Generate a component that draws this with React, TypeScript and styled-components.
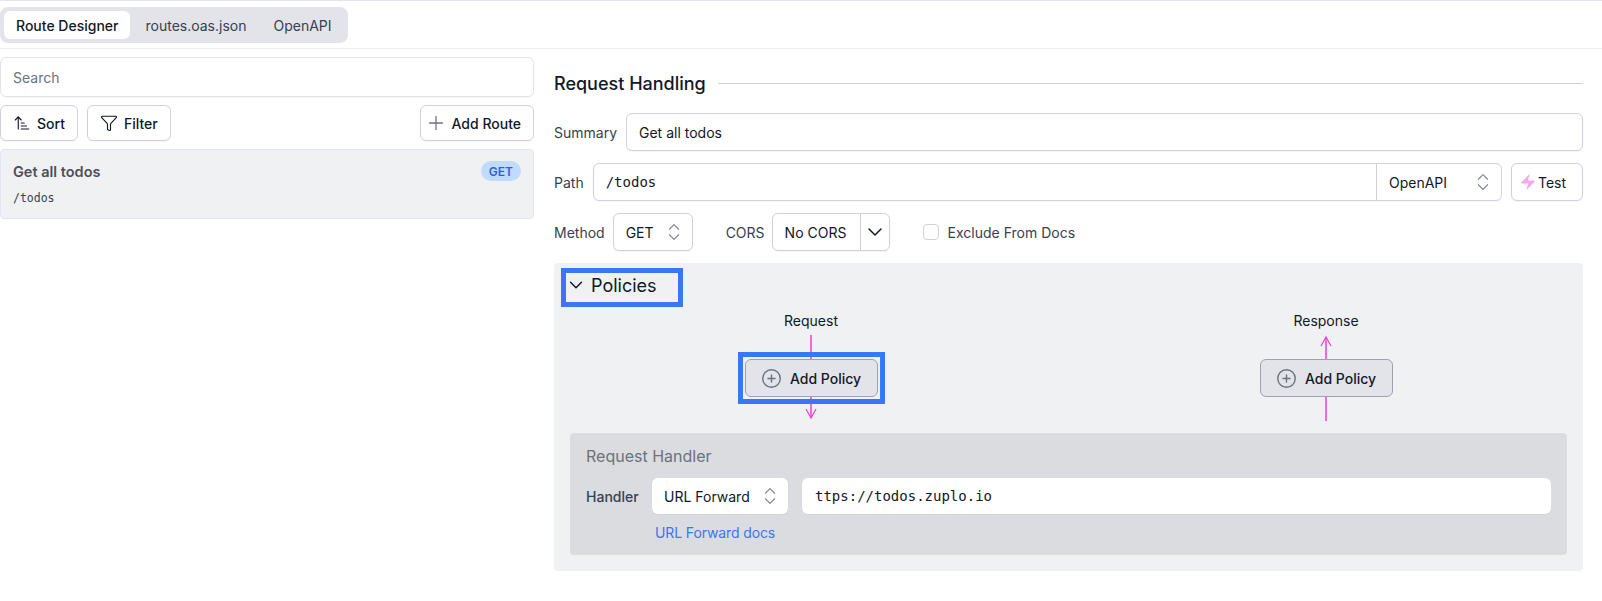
import * as React from 'react';
import styled, {createGlobalStyle} from 'styled-components';
import {ArrowUpNarrowWide, ChevronDown, ChevronsUpDown, CirclePlus, Filter, Plus, Zap} from 'lucide-react';

const GlobalStyle = createGlobalStyle`
    html, body {
        margin: 0;
        padding: 0;
        background: #fff;
    }
    body {
        font-family: Inter, "Noto Sans", sans-serif;
        font-size: 14px;
        color: #111827;
    }
    * {
        box-sizing: border-box;
    }
`;

const BORDER = '#cfd1dc';
const PINK = '#ec40cf';
const FOCUS = '#3b76f6';
const MONO = '"DejaVu Sans Mono", "Liberation Mono", monospace';

const Page = styled.div`
    width: 1602px;
    height: 601px;
    overflow: hidden;
    border-top: 1px solid #e2e5f0;
`;

const TabBar = styled.div`
    height: 48px;
    padding-top: 6px;
    border-bottom: 1px solid #eeeff3;
`;

const Tabs = styled.div`
    display: inline-flex;
    height: 36px;
    padding: 4px;
    gap: 3px;
    background: #e2e4e9;
    border-radius: 8px;
`;

const Tab = styled.div<{$active?: boolean}>`
    display: flex;
    align-items: center;
    padding: 0 12px;
    font-size: 14px;
    font-weight: ${p => (p.$active ? 500 : 400)};
    border-radius: 6px;
    color: ${p => (p.$active ? '#111827' : '#374151')};
    background: ${p => (p.$active ? '#fff' : 'transparent')};
`;

const Body = styled.div`
    display: flex;
    gap: 20px;
    padding-top: 8px;
`;

const Sidebar = styled.div`
    width: 534px;
    flex: none;
    display: flex;
    flex-direction: column;
    gap: 8px;
`;

const Search = styled.div`
    height: 40px;
    display: flex;
    align-items: center;
    padding: 0 12px;
    color: #6b7280;
    border: 1px solid #e2e4ea;
    border-radius: 6px;
    box-shadow: 0 1px 1px rgba(0, 0, 0, 0.04);
`;

const ButtonRow = styled.div`
    display: flex;
    gap: 9px;
`;

const Button = styled.div`
    height: 36px;
    display: flex;
    align-items: center;
    gap: 6px;
    padding: 0 12px;
    font-weight: 500;
    border: 1px solid ${BORDER};
    border-radius: 6px;
    box-shadow: 0 1px 1px rgba(0, 0, 0, 0.04);
`;

const AddRouteButton = styled(Button)`
    margin-left: auto;
    gap: 5px;
    padding: 0 12px 0 4px;
`;

const RouteCard = styled.div`
    height: 70px;
    padding: 11px 12px 0 12px;
    background: #f0f1f3;
    border: 1px solid #e2e5ee;
    border-radius: 4px;
`;

const RouteTop = styled.div`
    display: flex;
    align-items: center;
    justify-content: space-between;
`;

const RouteName = styled.div`
    font-size: 14.5px;
    font-weight: 600;
    color: #4b4f57;
`;

const Badge = styled.div`
    height: 20px;
    display: flex;
    align-items: center;
    padding: 0 8px;
    font-size: 12px;
    font-weight: 600;
    color: #2f5ee6;
    background: #bfdbfe;
    border-radius: 10px;
`;

const RoutePath = styled.div`
    margin-top: 10px;
    font-family: ${MONO};
    font-size: 11.5px;
    color: #374151;
`;

const Main = styled.div`
    width: 1029px;
    flex: none;
    display: flex;
    flex-direction: column;
`;

const SectionHead = styled.div`
    height: 36px;
    margin-top: 8px;
    display: flex;
    align-items: center;
    gap: 12px;
    font-size: 18px;
    font-weight: 500;
    color: #111827;
`;

const Rule = styled.div`
    flex: 1;
    height: 1px;
    background: #cfd1d6;
`;

const FormRow = styled.div`
    display: flex;
    align-items: center;
    height: 38px;
    margin-top: 12px;
`;

const Label = styled.div<{$gap?: number; $indent?: number}>`
    margin-left: ${p => p.$indent ?? 0}px;
    margin-right: ${p => p.$gap ?? 9}px;
    color: #374151;
`;

const Field = styled.div<{$mono?: boolean}>`
    flex: 1;
    height: 38px;
    display: flex;
    align-items: center;
    padding: 0 12px;
    font-family: ${p => (p.$mono ? MONO : 'inherit')};
    background: #fff;
    border: 1px solid ${BORDER};
    border-radius: 6px;
    box-shadow: 0 1px 1px rgba(0, 0, 0, 0.04);
`;

const PathJoin = styled.div`
    flex: 1;
    height: 38px;
    display: flex;
    border: 1px solid ${BORDER};
    border-radius: 6px;
    box-shadow: 0 1px 1px rgba(0, 0, 0, 0.04);
`;

const PathText = styled.div`
    flex: 1;
    display: flex;
    align-items: center;
    padding: 0 12px;
    font-family: ${MONO};
`;

const PathType = styled.div`
    width: 125px;
    display: flex;
    align-items: center;
    justify-content: space-between;
    padding: 0 7px 0 12px;
    border-left: 1px solid ${BORDER};
`;

const TestButton = styled(Button)`
    height: 38px;
    width: 72px;
    margin-left: 9px;
    padding: 0 0 0 7px;
    gap: 1px;
    font-weight: 400;
`;

const Select = styled.div<{$width: number; $plain?: boolean}>`
    width: ${p => p.$width}px;
    height: ${p => (p.$plain ? 36 : 38)}px;
    display: flex;
    align-items: center;
    justify-content: space-between;
    padding: 0 7px 0 12px;
    background: #fff;
    border: ${p => (p.$plain ? 'none' : `1px solid ${BORDER}`)};
    border-radius: 6px;
    box-shadow: 0 1px 1px rgba(0, 0, 0, 0.04);
`;

const SplitSelect = styled.div`
    width: 118px;
    height: 38px;
    display: flex;
    border: 1px solid ${BORDER};
    border-radius: 6px;
    box-shadow: 0 1px 1px rgba(0, 0, 0, 0.04);
`;

const SplitValue = styled.div`
    flex: 1;
    display: flex;
    align-items: center;
    padding-left: 12px;
`;

const SplitToggle = styled.div`
    width: 29px;
    display: flex;
    align-items: center;
    justify-content: center;
    border-left: 1px solid ${BORDER};
`;

const Check = styled.div`
    width: 16px;
    height: 16px;
    margin: 0 9px 0 33px;
    background: #fff;
    border: 1px solid ${BORDER};
    border-radius: 4px;
`;

const PoliciesPanel = styled.div`
    height: 308px;
    margin-top: 12px;
    padding: 10px 16px 0 16px;
    background: #f0f1f3;
    border-radius: 4px;
`;

const PoliciesToggle = styled.div`
    width: 112px;
    height: 29px;
    margin-left: -4px;
    padding-bottom: 5px;
    display: flex;
    align-items: center;
    gap: 4px;
    font-size: 18px;
    font-weight: 400;
    color: #111827;
    outline: 5px solid ${FOCUS};
    svg {
        flex: none;
        margin-left: -1px;
    }
`;

const FlowGrid = styled.div`
    display: grid;
    grid-template-columns: 482px 482px;
    column-gap: 33px;
    margin-top: 9px;
`;

const FlowColumn = styled.div`
    display: flex;
    flex-direction: column;
    align-items: center;
`;

const FlowLabel = styled.div`
    height: 20px;
    line-height: 20px;
    margin-bottom: 4px;
    font-size: 14px;
`;

const FocusRing = styled.div`
    position: relative;
    z-index: 1;
    outline: 5px solid ${FOCUS};
    outline-offset: 2px;
`;

const PolicyButton = styled.div`
    width: 133px;
    height: 38px;
    display: flex;
    align-items: center;
    justify-content: center;
    gap: 8px;
    font-weight: 500;
    background: #e2e4e9;
    border: 1px solid #9ca3af;
    border-radius: 6px;
`;

const CircleIcon = styled(CirclePlus)`
    color: #6b7280;
`;

const HandlerPanel = styled.div`
    height: 122px;
    margin-top: 12px;
    padding: 12px 16px 0 16px;
    background: #dadcdf;
    border-radius: 4px;
`;

const HandlerTitle = styled.div`
    height: 22px;
    line-height: 22px;
    font-size: 16px;
    color: #6b7280;
`;

const HandlerRow = styled.div`
    display: flex;
    align-items: center;
    margin-top: 11px;
    gap: 14px;
`;

const HandlerLabel = styled.div`
    font-weight: 500;
    color: #374151;
    width: 52px;
`;

const UrlField = styled(Field)`
    height: 36px;
    padding: 0 13px;
    border: none;
`;

const DocsLink = styled.a`
    display: block;
    margin: 10px 0 0 69px;
    color: #3b76f6;
    font-size: 14px;
    letter-spacing: -0.12px;
    text-decoration: none;
`;

const Arrow: React.FC<{height: number; dir?: 'up' | 'down'}> = ({height, dir}) => (
    <svg width="14" height={height} viewBox={`0 0 14 ${height}`} style={{display: 'block'}}>
        <line x1="7" y1={dir === 'up' ? 2 : 0} x2="7" y2={dir === 'down' ? height - 1 : height} stroke={PINK} strokeWidth="1.5" />
        {dir === 'down' && <path d={`M2 ${height - 10}L7 ${height - 1}L12 ${height - 10}`} fill="none" stroke={PINK} strokeWidth="1.2" />}
        {dir === 'up' && <path d="M2 11L7 2L12 11" fill="none" stroke={PINK} strokeWidth="1.2" />}
    </svg>
);

const UpDown: React.FC = () => <ChevronsUpDown size={22} strokeWidth={1.2} color="#7f8494" />;

const App: React.FC = () => {
    return (
        <Page>
            <GlobalStyle />
            <TabBar>
                <Tabs>
                    <Tab $active>Route Designer</Tab>
                    <Tab>routes.oas.json</Tab>
                    <Tab>OpenAPI</Tab>
                </Tabs>
            </TabBar>
            <Body>
                <Sidebar>
                    <Search>Search</Search>
                    <ButtonRow>
                        <Button>
                            <ArrowUpNarrowWide size={18} strokeWidth={1.5} />
                            Sort
                        </Button>
                        <Button>
                            <Filter size={18} strokeWidth={1.5} />
                            Filter
                        </Button>
                        <AddRouteButton>
                            <Plus size={22} strokeWidth={1.4} color="#6b7280" />
                            Add Route
                        </AddRouteButton>
                    </ButtonRow>
                    <RouteCard>
                        <RouteTop>
                            <RouteName>Get all todos</RouteName>
                            <Badge>GET</Badge>
                        </RouteTop>
                        <RoutePath>/todos</RoutePath>
                    </RouteCard>
                </Sidebar>
                <Main>
                    <SectionHead>
                        Request Handling
                        <Rule />
                    </SectionHead>
                    <FormRow>
                        <Label>Summary</Label>
                        <Field>Get all todos</Field>
                    </FormRow>
                    <FormRow>
                        <Label>Path</Label>
                        <PathJoin>
                            <PathText>/todos</PathText>
                            <PathType>
                                OpenAPI
                                <UpDown />
                            </PathType>
                        </PathJoin>
                        <TestButton>
                            <Zap size={18} strokeWidth={0} fill="#f9a8e8" />
                            Test
                        </TestButton>
                    </FormRow>
                    <FormRow>
                        <Label $gap={8}>Method</Label>
                        <Select $width={80}>
                            GET
                            <UpDown />
                        </Select>
                        <Label $gap={7} $indent={33}>
                            CORS
                        </Label>
                        <SplitSelect>
                            <SplitValue>No CORS</SplitValue>
                            <SplitToggle>
                                <ChevronDown size={24} strokeWidth={1.5} />
                            </SplitToggle>
                        </SplitSelect>
                        <Check />
                        <Label>Exclude From Docs</Label>
                    </FormRow>
                    <PoliciesPanel>
                        <PoliciesToggle>
                            <ChevronDown size={22} strokeWidth={1.6} />
                            Policies
                        </PoliciesToggle>
                        <FlowGrid>
                            <FlowColumn>
                                <FlowLabel>Request</FlowLabel>
                                <Arrow height={24} />
                                <FocusRing>
                                    <PolicyButton>
                                        <CircleIcon size={21} strokeWidth={1.6} />
                                        Add Policy
                                    </PolicyButton>
                                </FocusRing>
                                <Arrow height={22} dir="down" />
                            </FlowColumn>
                            <FlowColumn>
                                <FlowLabel>Response</FlowLabel>
                                <Arrow height={24} dir="up" />
                                <PolicyButton>
                                    <CircleIcon size={21} strokeWidth={1.6} />
                                    Add Policy
                                </PolicyButton>
                                <Arrow height={24} />
                            </FlowColumn>
                        </FlowGrid>
                        <HandlerPanel>
                            <HandlerTitle>Request Handler</HandlerTitle>
                            <HandlerRow>
                                <HandlerLabel>Handler</HandlerLabel>
                                <Select $width={136} $plain>
                                    URL Forward
                                    <UpDown />
                                </Select>
                                <UrlField $mono>ttps://todos.zuplo.io</UrlField>
                            </HandlerRow>
                            <DocsLink href="#">URL Forward docs</DocsLink>
                        </HandlerPanel>
                    </PoliciesPanel>
                </Main>
            </Body>
        </Page>
    );
};

export default App;
